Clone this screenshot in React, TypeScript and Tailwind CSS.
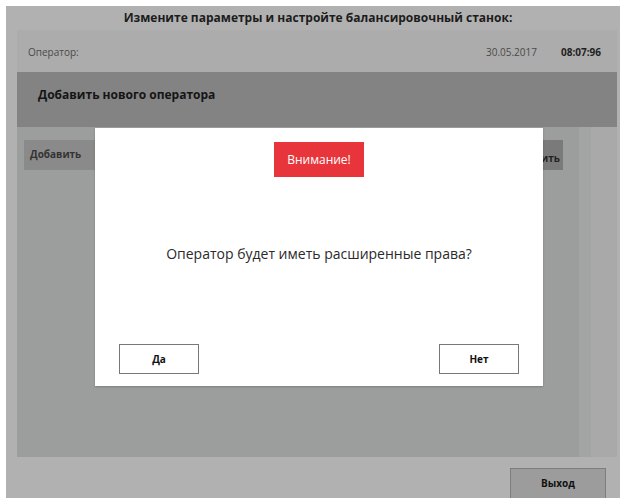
import React from 'react'

const font = { fontFamily: '"Open Sans", "Noto Sans", sans-serif' }

function Header() {
  return (
    <>
      <div className="h-[24px] flex items-center justify-center pl-[10px] text-[12px] font-bold text-[#1c1c1c]">
        Измените параметры и настройте балансировочный станок:
      </div>
      <div className="ml-[11px] mr-[3px] h-[42px] bg-[#acacac] flex items-center pl-[11px] pr-[16px] text-[10px] text-[#4a4a4a]">
        <span className="flex-1 pt-[2px]">Оператор:</span>
        <span className="pt-[2px]">30.05.2017</span>
        <span className="ml-[24px] pt-[2px] font-bold text-[#1e1e1e]">08:07:96</span>
      </div>
      <div className="ml-[11px] mr-[3px] h-[55px] bg-[#838383] flex pt-[14px] pl-[21px] text-[12px] font-bold text-[#151515]">
        Добавить нового оператора
      </div>
    </>
  )
}

function Content() {
  return (
    <div className="flex ml-[11px] mr-[3px] h-[330px]">
      <div className="w-[562px] bg-[#9b9e9c] pt-[13px] px-[7px] flex justify-between">
        <div className="w-[90px] h-[30px] bg-[#8a8a8a] text-[10px] text-[#333] font-bold pl-[6px] pt-[7px]">
          Добавить
        </div>
        <div className="w-[90px] h-[30px] bg-[#7a7a7a] text-[10px] text-[#222] font-bold flex items-end justify-end pr-[3px] pb-[4px] mr-[9px]">
          Удалить
        </div>
      </div>
      <div className="w-[12px] bg-[#a3a5a4]" />
      <div className="flex-1 bg-[#a9a9a9]" />
    </div>
  )
}

function Dialog() {
  return (
    <div className="absolute left-[95px] top-[128px] w-[448px] h-[258px] bg-white flex flex-col items-center shadow-[0_1px_2px_rgba(0,0,0,0.2)]">
      <div className="mt-[14px] w-[90px] h-[35px] bg-[#e8353b] text-white text-[12px] flex items-center justify-center">
        Внимание!
      </div>
      <div className="mt-[66px] text-[14px] text-[#2a2a2a]">
        Оператор будет иметь расширенные права?
      </div>
      <div className="mt-auto mb-[12px] w-full flex justify-between px-[24px]">
        <button className="w-[80px] h-[30px] border border-[#777] bg-white text-[10px] font-bold text-[#111]">
          Да
        </button>
        <button className="w-[80px] h-[30px] border border-[#777] bg-white text-[10px] font-bold text-[#111]">
          Нет
        </button>
      </div>
    </div>
  )
}

export default function App() {
  return (
    <div className="relative w-[626px] h-[498px] bg-white overflow-hidden" style={font}>
      <div className="absolute left-[6px] top-[6px] w-[614px] h-[492px] bg-[#b1b1b1] flex flex-col">
        <Header />
        <Content />
        <div className="flex-1 flex justify-end items-end pr-[14px]">
          <button className="w-[96px] h-[30px] bg-[#9c9c9c] border border-[#7d7d7d] border-b-0 text-[10px] font-bold text-[#111]">
            Выход
          </button>
        </div>
      </div>
      <Dialog />
    </div>
  )
}
